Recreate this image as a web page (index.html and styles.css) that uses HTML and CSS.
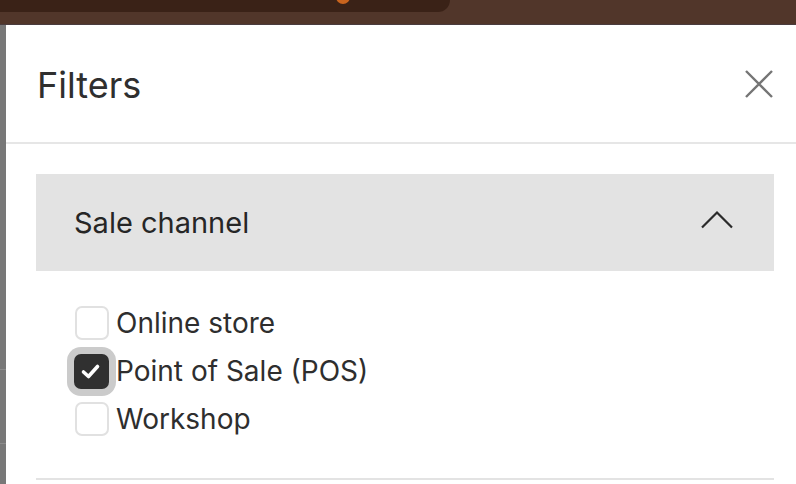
FILE: index.html
```html
<!DOCTYPE html>
<html lang="en">
<head>
    <meta charset="UTF-8">
    <meta name="viewport" content="width=device-width, initial-scale=1.0">
    <title>Filters</title>
    <link rel="stylesheet" href="styles.css">
</head>
<body>
    <!-- Page behind the drawer (dimmed) -->
    <div class="backdrop-top">
        <div class="backdrop-bar">
            <span class="backdrop-dot"></span>
        </div>
    </div>

    <div class="drawer-row">
        <div class="backdrop-side">
            <span class="side-line side-line-1"></span>
            <span class="side-line side-line-2"></span>
        </div>

        <!-- Filters drawer -->
        <aside class="drawer">
            <header class="drawer-header">
                <h2 class="drawer-title">Filters</h2>
                <button class="close-button" aria-label="Close">
                    <svg width="28" height="28" viewBox="0 0 28 28">
                        <path d="M1 1 L27 27 M27 1 L1 27" stroke="#757575" stroke-width="2.4" fill="none"/>
                    </svg>
                </button>
            </header>

            <div class="drawer-body">
                <div class="filter-group">
                    <button class="group-header">
                        <span>Sale channel</span>
                        <svg width="34" height="20" viewBox="0 0 34 20">
                            <path d="M2 17.5 L17 2.5 L32 17.5" stroke="#2b2b2b" stroke-width="2.2" fill="none"/>
                        </svg>
                    </button>

                    <ul class="option-list">
                        <li class="option">
                            <span class="checkbox"></span>
                            <span class="option-label">Online store</span>
                        </li>
                        <li class="option">
                            <span class="checkbox checked">
                                <svg width="35" height="35" viewBox="0 0 35 35">
                                    <path d="M9.5 18 L14.5 22.5 L23.5 12.5" stroke="#fff" stroke-width="3.6" stroke-linecap="round" stroke-linejoin="round" fill="none"/>
                                </svg>
                            </span>
                            <span class="option-label">Point of Sale (POS)</span>
                        </li>
                        <li class="option">
                            <span class="checkbox"></span>
                            <span class="option-label">Workshop</span>
                        </li>
                    </ul>
                </div>
            </div>
        </aside>
    </div>
</body>
</html>
```

FILE: styles.css
```css
body {
    margin: 0;
    padding: 0;
    height: 484px;
    overflow: hidden;
    font-family: Inter, "Noto Sans", Arial, sans-serif;
    color: #303030;
    background-color: #7b7b7b;
    display: flex;
    flex-direction: column;
}
.backdrop-top {
    height: 24px;
    background-color: #51362a;
    border-bottom: 1px solid #4a3c3e;
    flex-shrink: 0;
}
.backdrop-bar {
    position: relative;
    width: 450px;
    height: 12px;
    background-color: #3a2217;
    border-bottom-right-radius: 14px;
}
.backdrop-dot {
    position: absolute;
    left: 336px;
    top: -10px;
    width: 14px;
    height: 14px;
    border-radius: 50%;
    background-color: #c8641e;
}
.drawer-row {
    flex: 1;
    display: flex;
}
.backdrop-side {
    position: relative;
    width: 6px;
    background-color: #787878;
    flex-shrink: 0;
}
.side-line {
    position: absolute;
    left: 0;
    width: 6px;
    height: 1px;
    background-color: #8c8c8c;
}
.side-line-1 { top: 344px; }
.side-line-2 { top: 418px; }
.drawer {
    flex: 1;
    background-color: #fff;
    display: flex;
    flex-direction: column;
}
.drawer-header {
    height: 117px;
    display: flex;
    align-items: center;
    justify-content: space-between;
    padding: 0 22px 0 31px;
    border-bottom: 2px solid #e6e6e6;
}
.drawer-title {
    margin: 0;
    margin-top: 3px;
    font-size: 36px;
    font-weight: 400;
    color: #2f2f2f;
}
.close-button {
    background: none;
    border: none;
    padding: 0;
    width: 28px;
    height: 28px;
    cursor: pointer;
    margin-right: 1px;
}
.close-button svg {
    display: block;
}
.drawer-body {
    padding: 30px 22px 0 30px;
}
.filter-group {
    border-bottom: 2px solid #e3e3e3;
    padding-bottom: 42px;
}
.group-header {
    width: 100%;
    height: 97px;
    border: none;
    background-color: #e3e3e3;
    display: flex;
    align-items: center;
    justify-content: space-between;
    padding: 0 40px 0 38px;
    font-family: inherit;
    font-size: 29px;
    color: #262626;
    cursor: pointer;
}
.group-header svg {
    display: block;
    margin-top: -6px;
}
.option-list {
    list-style: none;
    margin: 0;
    padding: 35px 0 0 38px;
    display: flex;
    flex-direction: column;
    gap: 14px;
}
.option {
    display: flex;
    align-items: center;
    gap: 7px;
    height: 34px;
}
.checkbox {
    width: 30px;
    height: 30px;
    border: 2px solid #e1e1e1;
    border-radius: 7px;
    flex-shrink: 0;
    margin-left: 1px;
}
.checkbox.checked {
    width: 35px;
    height: 35px;
    margin-left: 0;
    border: none;
    background-color: #303030;
    box-shadow: 0 0 0 7px #cbcbcb;
    border-radius: 7px;
}
.checkbox.checked svg {
    display: block;
}
.option-label {
    font-size: 28px;
    color: #2e2e2e;
}
```
